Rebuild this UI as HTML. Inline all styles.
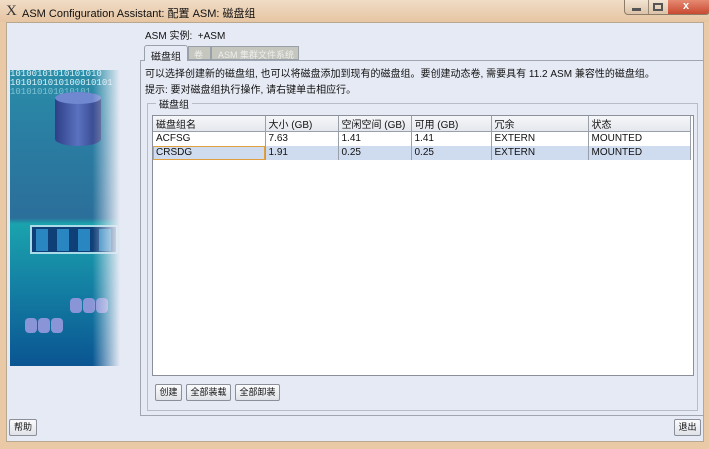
<!DOCTYPE html>
<html><head><meta charset="utf-8"><style>
*{box-sizing:border-box;margin:0;padding:0}
body{width:709px;height:449px;overflow:hidden;background:#e9c9a6;font-family:"Liberation Sans","Noto Sans CJK SC",sans-serif;font-size:10px;color:#111;position:relative}
.abs{position:absolute}
.title{left:0;top:0;width:709px;height:22px;background:linear-gradient(#f0dcc6,#e6c5a2)}
.content{left:6px;top:22px;width:698px;height:420px;background:#e6eaf4;border:1px solid #b8a890}
.btn{position:absolute;height:17px;border:1px solid #8a8f99;border-radius:2px;background:linear-gradient(#fbfbfc,#dfe2e8);font-size:9px;line-height:15px;text-align:center}
td{border-right:1px solid #9aa0aa;padding:0 3px;height:14px;font-size:10px;white-space:nowrap;overflow:hidden}
table{border-collapse:collapse;table-layout:fixed}
</style></head><body>
<div class="abs title"></div>
<div class="abs" style="left:6px;top:3px;font-size:15px;color:#333;font-family:'Liberation Serif',serif">X</div>
<div class="abs" style="left:22px;top:5px;font-size:11px;color:#111">ASM Configuration Assistant: 配置 ASM: 磁盘组</div>
<div class="abs" style="left:624px;top:0;width:86px;height:15px;border:1px solid #8d7b68;border-top:none;border-radius:0 0 4px 4px;background:linear-gradient(#f3e4d3,#dcc3a8);overflow:hidden">
 <div class="abs" style="left:23px;top:0;width:1px;height:15px;background:#9a8a78"></div>
 <div class="abs" style="left:43px;top:0;width:43px;height:15px;background:linear-gradient(#e58a72,#c6452c)"></div>
 <div class="abs" style="left:7px;top:8px;width:9px;height:3px;background:#555"></div>
 <div class="abs" style="left:28px;top:3px;width:10px;height:8px;border:2px solid #555"></div>
 <div class="abs" style="left:58px;top:0;color:#fff;font-weight:bold;font-size:11px">x</div>
</div>
<div class="abs content"></div>
<div class="abs" style="left:10px;top:70px;width:110px;height:296px;background:linear-gradient(#2b8ea8 0%,#2a7fa3 20%,#2b6f9b 50%,#1aa3ad 52%,#1585a5 70%,#0a5592 100%);overflow:hidden">
 <div class="abs" style="left:0;top:0;font-size:9px;color:#d9f2f8;font-family:'Liberation Mono',monospace;line-height:9px">10100101010101010<br>1010101010100010101<br><span style="color:#7fc3d3">101010101010101</span></div>
 <div class="abs" style="left:45px;top:22px;width:46px;height:54px;border-radius:23px/7px;background:linear-gradient(90deg,#2e3f86,#5a72c0 50%,#2b3b7e)"></div>
 <div class="abs" style="left:45px;top:22px;width:46px;height:12px;border-radius:50%;background:#6f88d0"></div>
 <div class="abs" style="left:20px;top:155px;width:88px;height:29px;background:#0e3f77;border:2px solid #a9dbe8"></div>
 <div class="abs" style="left:26px;top:159px;width:12px;height:22px;background:#2a86c0"></div>
 <div class="abs" style="left:47px;top:159px;width:12px;height:22px;background:#2a86c0"></div>
 <div class="abs" style="left:68px;top:159px;width:12px;height:22px;background:#2a86c0"></div>
 <div class="abs" style="left:89px;top:159px;width:12px;height:22px;background:#2a86c0"></div>
 <div class="abs" style="left:15px;top:248px;width:12px;height:15px;background:#8a95d8;border-radius:4px"></div>
 <div class="abs" style="left:28px;top:248px;width:12px;height:15px;background:#8a95d8;border-radius:4px"></div>
 <div class="abs" style="left:41px;top:248px;width:12px;height:15px;background:#8a95d8;border-radius:4px"></div>
 <div class="abs" style="left:60px;top:228px;width:12px;height:15px;background:#8a95d8;border-radius:4px"></div>
 <div class="abs" style="left:73px;top:228px;width:12px;height:15px;background:#8a95d8;border-radius:4px"></div>
 <div class="abs" style="left:86px;top:228px;width:12px;height:15px;background:#8a95d8;border-radius:4px"></div>
 <div class="abs" style="left:0;top:0;width:110px;height:296px;background:linear-gradient(90deg,rgba(230,234,244,0) 75%,#e6eaf4 100%)"></div>
</div>
<div class="abs" style="left:145px;top:27px">ASM 实例: &nbsp;+ASM</div>
<div class="abs" style="left:144px;top:45px;width:44px;height:16px;background:#e6eaf4;border:1px solid #9aa0aa;border-bottom:none;border-radius:3px 3px 0 0;padding:2px 0 0 6px;z-index:2">磁盘组</div>
<div class="abs" style="left:188px;top:46px;width:23px;height:14px;background:#c5c6bd;border:1px solid #9aa0aa;color:#eee;padding:1px 0 0 5px;font-size:9px">卷</div>
<div class="abs" style="left:211px;top:46px;width:88px;height:14px;background:#c5c6bd;border:1px solid #9aa0aa;color:#eee;padding:1px 0 0 6px;font-size:9px;white-space:nowrap;overflow:hidden">ASM 集群文件系统</div>
<div class="abs" style="left:140px;top:60px;width:564px;height:356px;border:1px solid #a0a6b0;border-right:none"></div>
<div class="abs" style="left:145px;top:65px">可以选择创建新的磁盘组, 也可以将磁盘添加到现有的磁盘组。要创建动态卷, 需要具有 11.2 ASM 兼容性的磁盘组。</div>
<div class="abs" style="left:145px;top:81px">提示: 要对磁盘组执行操作, 请右键单击相应行。</div>
<div class="abs" style="left:147px;top:103px;width:551px;height:308px;border:1px solid #b8bcc4"></div>
<div class="abs" style="left:156px;top:96px;background:#e6eaf4;padding:0 3px">磁盘组</div>
<div class="abs" style="left:152px;top:115px;width:542px;height:261px;background:#fff;border:1px solid #8a8f99">
<table style="width:537px">
<colgroup><col style="width:112px"><col style="width:73px"><col style="width:73px"><col style="width:80px"><col style="width:97px"><col style="width:102px"></colgroup>
<tr style="background:linear-gradient(#f6f7f9,#e3e6ec)"><td style="border-bottom:1px solid #9aa0aa">磁盘组名</td><td style="border-bottom:1px solid #9aa0aa">大小 (GB)</td><td style="border-bottom:1px solid #9aa0aa">空闲空间 (GB)</td><td style="border-bottom:1px solid #9aa0aa">可用 (GB)</td><td style="border-bottom:1px solid #9aa0aa">冗余</td><td style="border-bottom:1px solid #9aa0aa">状态</td></tr>
<tr><td>ACFSG</td><td>7.63</td><td>1.41</td><td>1.41</td><td>EXTERN</td><td>MOUNTED</td></tr>
<tr style="background:#cfdcef"><td style="outline:1px solid #e0a040;outline-offset:-1px">CRSDG</td><td>1.91</td><td>0.25</td><td>0.25</td><td>EXTERN</td><td>MOUNTED</td></tr>
</table>
</div>
<div class="btn" style="left:155px;top:384px;width:27px">创建</div>
<div class="btn" style="left:186px;top:384px;width:45px">全部装载</div>
<div class="btn" style="left:235px;top:384px;width:45px">全部卸装</div>
<div class="btn" style="left:9px;top:419px;width:28px">帮助</div>
<div class="btn" style="left:674px;top:419px;width:27px">退出</div>
</body></html>
